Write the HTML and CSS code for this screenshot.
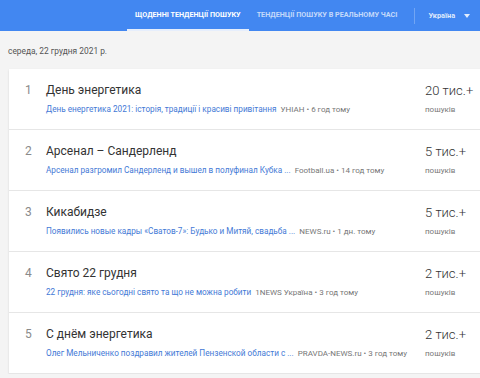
FILE: index.html
```html
<!DOCTYPE html>
<html>
<head>
    <title>Тенденції пошуку</title>
    <link rel="stylesheet" href="styles.css">
</head>
<body>
    <div class="header">
        <div class="tab active">ЩОДЕННІ ТЕНДЕНЦІЇ ПОШУКУ</div>
        <div class="tab">ТЕНДЕНЦІЇ ПОШУКУ В РЕАЛЬНОМУ ЧАСІ</div>
        <div class="divider"></div>
        <div class="country">Україна <span class="arrow"></span></div>
    </div>

    <div class="date">середа, 22 грудня 2021 р.</div>

    <div class="card">
        <div class="row">
            <div class="rank">1</div>
            <div class="info">
                <div class="title">День энергетика</div>
                <div class="sub"><span class="link">День енергетика 2021: історія, традиції і красиві привітання</span><span class="source">УНІАН • 6 год тому</span></div>
            </div>
            <div class="count">
                <div class="num">20 тис.+</div>
                <div class="label">пошуків</div>
            </div>
        </div>
        <div class="row">
            <div class="rank">2</div>
            <div class="info">
                <div class="title">Арсенал – Сандерленд</div>
                <div class="sub"><span class="link">Арсенал разгромил Сандерленд и вышел в полуфинал Кубка ...</span><span class="source">Football.ua • 14 год тому</span></div>
            </div>
            <div class="count">
                <div class="num">5 тис.+</div>
                <div class="label">пошуків</div>
            </div>
        </div>
        <div class="row">
            <div class="rank">3</div>
            <div class="info">
                <div class="title">Кикабидзе</div>
                <div class="sub"><span class="link">Появились новые кадры «Сватов-7»: Будько и Митяй, свадьба ...</span><span class="source">NEWS.ru • 1 дн. тому</span></div>
            </div>
            <div class="count">
                <div class="num">5 тис.+</div>
                <div class="label">пошуків</div>
            </div>
        </div>
        <div class="row">
            <div class="rank">4</div>
            <div class="info">
                <div class="title">Свято 22 грудня</div>
                <div class="sub"><span class="link">22 грудня: яке сьогодні свято та що не можна робити</span><span class="source">1NEWS Україна • 3 год тому</span></div>
            </div>
            <div class="count">
                <div class="num">2 тис.+</div>
                <div class="label">пошуків</div>
            </div>
        </div>
        <div class="row">
            <div class="rank">5</div>
            <div class="info">
                <div class="title">С днём энергетика</div>
                <div class="sub"><span class="link">Олег Мельниченко поздравил жителей Пензенской области с ...</span><span class="source">PRAVDA-NEWS.ru • 3 год тому</span></div>
            </div>
            <div class="count">
                <div class="num">2 тис.+</div>
                <div class="label">пошуків</div>
            </div>
        </div>
    </div>
</body>
</html>
```

FILE: styles.css
```css
body {
    margin: 0;
    font-family: Roboto, "Liberation Sans", Arial, sans-serif;
    background-color: #f4f4f4;
    overflow: hidden;
}

.header {
    display: flex;
    align-items: stretch;
    height: 31px;
    padding-left: 127px;
    background-color: #4287f1;
    color: #fff;
    font-size: 7.2px;
    font-weight: bold;
}

.tab {
    display: flex;
    align-items: center;
    padding: 0 8px;
    color: rgba(255, 255, 255, 0.7);
    box-sizing: border-box;
    border-bottom: 2px solid transparent;
}

.tab.active {
    color: #fff;
    border-bottom-color: #e6eefc;
}

.divider {
    width: 1px;
    margin: 8px 13px 7px 9px;
    background-color: rgba(255, 255, 255, 0.25);
}

.country {
    display: flex;
    align-items: center;
    font-size: 7.4px;
    color: rgba(255, 255, 255, 0.85);
}

.arrow {
    margin-left: 9px;
    width: 0;
    height: 0;
    border-left: 3px solid transparent;
    border-right: 3px solid transparent;
    border-top: 4px solid rgba(255, 255, 255, 0.85);
}

.date {
    margin: 14px 0 12px 8px;
    font-size: 8.4px;
    line-height: 12px;
    color: #555;
}

.card {
    margin-left: 9px;
    width: 480px;
    background-color: #fff;
    box-shadow: 0 1px 2px rgba(0, 0, 0, 0.12);
}

.row {
    display: grid;
    grid-template-columns: 21px 1fr 64px;
    height: 60px;
    padding-left: 16px;
    border-bottom: 1px solid #e6e6e6;
}

.rank {
    padding-top: 13px;
    font-size: 12px;
    line-height: 16px;
    color: #8a8a8a;
}

.title {
    padding-top: 13px;
    font-size: 12px;
    line-height: 16px;
    color: #333;
}

.sub {
    margin-top: 5px;
    font-size: 8px;
    line-height: 12px;
    white-space: nowrap;
}

.link {
    font-size: 8.2px;
    color: #4479d6;
}

.source {
    margin-left: 4px;
    font-size: 8px;
    color: #777;
}

.num {
    padding-top: 13px;
    font-size: 13px;
    font-weight: 300;
    line-height: 17px;
    color: #333;
}

.label {
    margin-top: 6px;
    font-size: 8px;
    line-height: 10px;
    color: #777;
}
```
